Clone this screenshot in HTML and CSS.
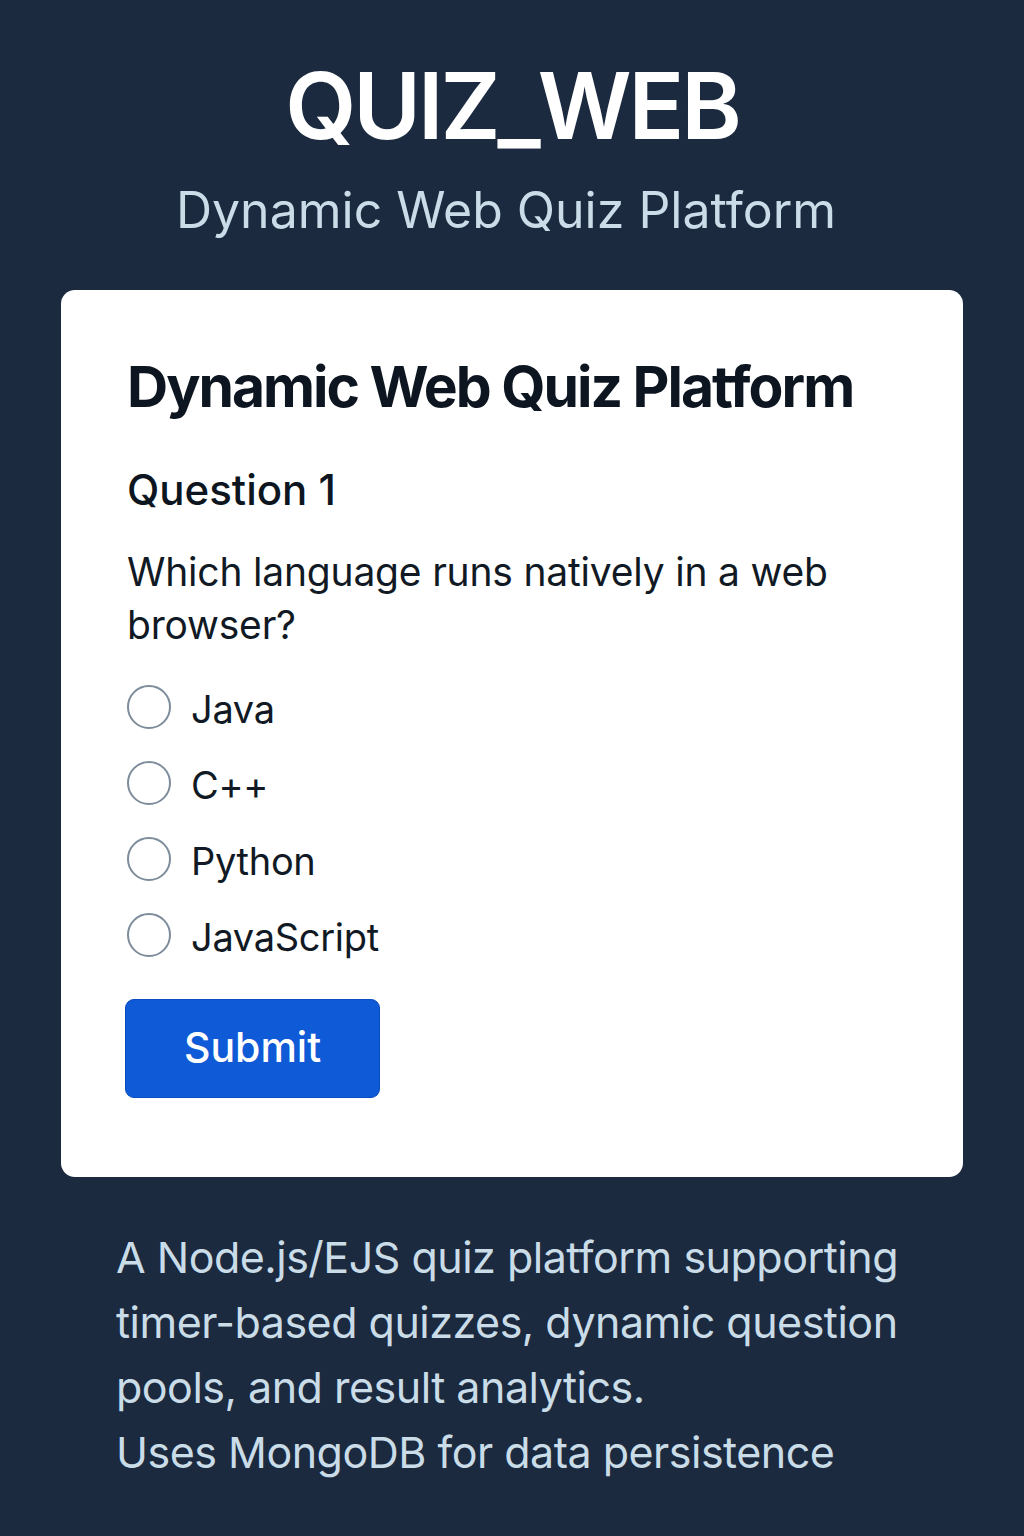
FILE: index.html
```html
<!DOCTYPE html>
<html lang="en">
<head>
<meta charset="utf-8">
<title>QUIZ_WEB</title>
<link rel="stylesheet" href="styles.css">
</head>
<body>
<div class="page">
  <header class="hero">
    <h1 class="brand">QUIZ_WEB</h1>
    <p class="tagline">Dynamic Web Quiz Platform</p>
  </header>
  <main class="card">
    <h2 class="card-title">Dynamic Web Quiz Platform</h2>
    <h3 class="q-num">Question 1</h3>
    <p class="q-text">Which language runs natively in a web browser?</p>
    <div class="options">
      <label class="option"><span class="radio"></span><span class="opt-label">Java</span></label>
      <label class="option"><span class="radio"></span><span class="opt-label">C++</span></label>
      <label class="option"><span class="radio"></span><span class="opt-label">Python</span></label>
      <label class="option"><span class="radio"></span><span class="opt-label">JavaScript</span></label>
    </div>
    <button class="submit">Submit</button>
  </main>
  <footer class="about">
    <p>A Node.js/EJS quiz platform supporting timer-based quizzes, dynamic question pools, and result analytics.<br>Uses MongoDB for data persistence</p>
  </footer>
</div>
</body>
</html>
```
FILE: styles.css
```css
* { box-sizing: border-box; }
html, body { margin: 0; padding: 0; }
body {
  background: #1b2a3e;
  font-family: Inter, "Noto Sans", "Liberation Sans", sans-serif;
  width: 1024px;
  min-height: 1536px;
}
.page {
  display: flex;
  flex-direction: column;
  align-items: center;
  padding-top: 56px;
}
.hero {
  display: flex;
  flex-direction: column;
  align-items: center;
}
.brand {
  margin: 0;
  color: #ffffff;
  font-size: 92px;
  font-weight: 600;
  line-height: 100px;
  letter-spacing: -3px;
}
.tagline {
  margin: 22px 12px 0 0;
  color: #c9dce8;
  font-size: 50px;
  font-weight: 400;
  line-height: 64px;
}
.card {
  margin-top: 48px;
  width: 902px;
  background: #ffffff;
  border-radius: 14px;
  padding: 62px 66px 79px;
  color: #0d1620;
}
.card-title {
  margin: 0;
  font-size: 57px;
  font-weight: 700;
  line-height: 70px;
  letter-spacing: -2px;
  white-space: nowrap;
}
.q-num {
  margin: 42px 0 0;
  font-size: 42px;
  font-weight: 500;
  line-height: 52px;
}
.q-text {
  margin: 29px 0 0;
  font-size: 39px;
  font-weight: 400;
  line-height: 53px;
  letter-spacing: -0.2px;
  color: #111a24;
}
.options {
  margin-top: 34px;
  display: flex;
  flex-direction: column;
  gap: 32px;
}
.option {
  display: flex;
  align-items: center;
  gap: 20px;
  height: 44px;
  font-size: 38px;
  letter-spacing: -0.3px;
  color: #111a24;
}
.opt-label {
  padding-top: 4px;
  line-height: 40px;
}
.radio {
  width: 44px;
  height: 44px;
  border: 2px solid #7d8c9b;
  border-radius: 50%;
  flex: none;
}
.submit {
  margin-top: 42px;
  margin-left: -2px;
  width: 255px;
  height: 99px;
  background: #0f5ad6;
  border: 1px solid #0a4bbf;
  border-radius: 9px;
  color: #ffffff;
  font-family: inherit;
  font-size: 41px;
  font-weight: 500;
  padding: 0 0 3px;
}
.about {
  width: 1024px;
  padding: 48px 70px 0 116px;
}
.about p {
  margin: 0;
  color: #c9dce8;
  font-size: 43px;
  line-height: 65px;
  font-weight: 400;
  letter-spacing: -0.5px;
}
```
